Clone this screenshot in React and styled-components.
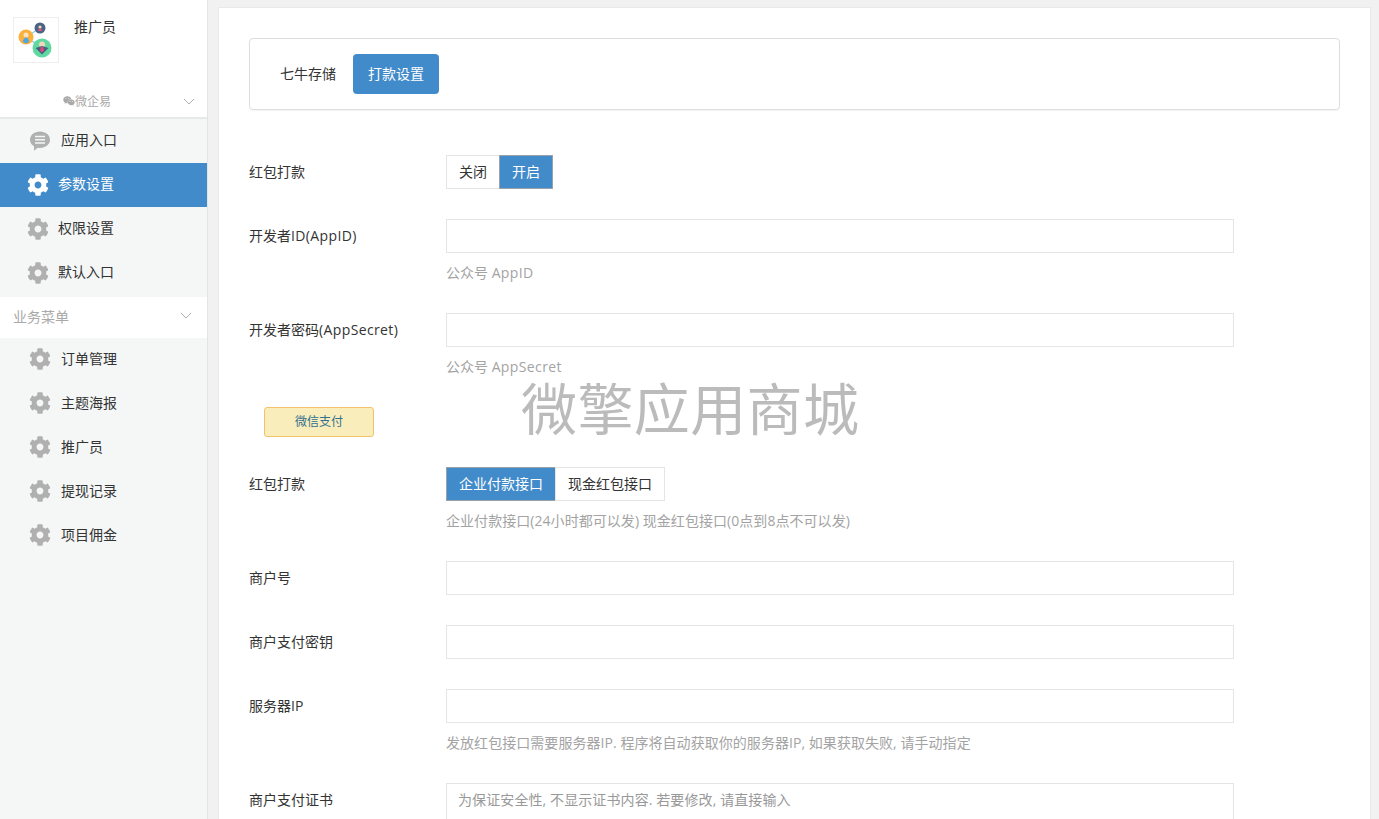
import React from "react";
import styled, { createGlobalStyle } from "styled-components";
import { FaCog, FaWeixin } from "react-icons/fa";

const Global = createGlobalStyle`
  html, body { margin: 0; padding: 0; height: 819px; overflow: hidden; background: #f1f1f1; }
  body { font-family: "Open Sans", "Noto Sans CJK SC", sans-serif; font-size: 14px; color: #333; }
  * { box-sizing: border-box; }
`;

const Page = styled.div`
  display: flex;
  height: 819px;
  overflow: hidden;
`;
const Side = styled.aside`
  width: 208px;
  flex: none;
  background: #f5f7f7;
  border-right: 1px solid #e3e5e5;
  height: 819px;
`;
const Brand = styled.div`
  height: 119px;
  background: #fff;
  border-bottom: 2px solid #e7e9e9;
  display: flex;
  flex-direction: column;
`;
const BrandTop = styled.div`
  display: flex;
  padding: 17px 0 0 13px;
  gap: 15px;
  height: 91px;
`;
const LogoBox = styled.div`
  width: 46px;
  height: 46px;
  border: 1px solid #eee;
`;
const BrandName = styled.div`
  line-height: 20px;
  color: #333;
`;
const AppRow = styled.div`
  display: flex;
  align-items: center;
  justify-content: space-between;
  height: 20px;
  padding: 0 12px 0 63px;
  font-size: 12px;
  color: #a9a9a9;
`;
const AppLabel = styled.span`
  display: flex;
  align-items: center;
`;
const NavItem = styled.div`
  height: 44px;
  display: flex;
  align-items: center;
  padding-left: ${p => p.$indent}px;
  gap: ${p => p.$gap}px;
  background: ${p => (p.$active ? "#428bca" : "transparent")};
  color: ${p => (p.$active ? "#fff" : "#333")};
  font-size: 14px;
`;
const NavText = styled.span`
  margin-bottom: ${p => p.$lift}px;
`;
const IconSlot = styled.span`
  display: flex;
  color: ${p => (p.$active ? "#fff" : "#b0b0b0")};
  font-size: 22px;
`;
const Group = styled.div`
  height: 41px;
  margin-top: 2px;
  background: #fff;
  display: flex;
  align-items: center;
  justify-content: space-between;
  padding: 0 15px 4px 13px;
  color: #a9a9a9;
  font-size: 14px;
  margin-bottom: -1px;
`;
const Main = styled.main`
  width: 1153px;
  margin: 7px 0 0 10px;
  background: #fff;
  border: 1px solid #e9e9e9;
  padding: 30px 30px 0 30px;
  height: 900px;
  position: relative;
  flex: none;
`;
const TabBar = styled.div`
  width: 1091px;
  height: 72px;
  border: 1px solid #ddd;
  border-radius: 4px;
  box-shadow: 0 1px 1px rgba(0,0,0,.05);
  padding: 15px;
  display: flex;
  gap: 2px;
  margin-bottom: 45px;
`;
const Tab = styled.div`
  height: 40px;
  padding: 0 15px;
  line-height: 40px;
  border-radius: 4px;
  background: ${p => (p.$active ? "#428bca" : "transparent")};
  color: ${p => (p.$active ? "#fff" : "#333")};
`;
const Row = styled.div`
  display: flex;
  margin-bottom: 30px;
`;
const Label = styled.label`
  width: 197px;
  flex: none;
  line-height: 20px;
  padding-top: 7px;
  color: #333;
`;
const Latin = styled.span`
  letter-spacing: 0.38px;
`;
const Field = styled.div`
  width: 788px;
`;
const Input = styled.div`
  height: 34px;
  border: 1px solid #e5e5e5;
  background: #fff;
`;
const TextArea = styled.div`
  height: 80px;
  border: 1px solid #e5e5e5;
  padding: 6px 11px;
  line-height: 20px;
  letter-spacing: 0.1px;
  color: #999;
`;
const Help = styled.div`
  margin-top: 10px;
  line-height: 20px;
  color: #a3a3a3;
  letter-spacing: ${p => (p.$long ? "0.05px" : "0")};
`;
const Toggle = styled.div`
  display: inline-flex;
  height: 34px;
`;
const ToggleBtn = styled.div`
  padding: 0 12px;
  line-height: 32px;
  border: 1px solid ${p => (p.$on ? "#9aa3ab" : "#e5e5e5")};
  background: ${p => (p.$on ? "#428bca" : "#fff")};
  color: ${p => (p.$on ? "#fff" : "#333")};
  margin-left: ${p => (p.$first ? 0 : -1)}px;
`;
const Tag = styled.div`
  margin: 0 0 30px 15px;
  width: 110px;
  height: 30px;
  line-height: 28px;
  text-align: center;
  font-size: 12px;
  color: #31708f;
  background: #faedbc;
  border: 1px solid #f4c26e;
  border-radius: 3px;
`;
const Watermark = styled.div`
  position: absolute;
  left: 302px;
  top: 371px;
  font-size: 56px;
  line-height: 58px;
  letter-spacing: 0.4px;
  color: rgba(120,120,120,.5);
  white-space: nowrap;
`;

const Chevron = () => (
  <svg width="12" height="7" viewBox="0 0 12 7" fill="none" stroke="#b0b0b0" strokeWidth="1">
    <path d="M1 1l5 5 5-5" />
  </svg>
);
const Bubble = () => (
  <svg width="22" height="22" viewBox="0 0 22 22">
    <path fill="#b0b0b0" d="M11 1.500c5.600 0 10 3.600 10 8.200s-4.400 8.200-10 8.200c-.8 0-1.500-.1-2.300-.2L5 20.700V16.300C2.500 14.800 1 12.400 1 9.700 1 5.100 5.400 1.500 11 1.500z" />
    <path stroke="#f4f6f6" strokeWidth="1.500" d="M6 6.500h10M6 9.800h10M6 13h10" />
  </svg>
);
const Logo = () => (
  <svg width="44" height="44" viewBox="14 18 44 44" style={{ display: "block" }}>
    <path stroke="#8fc7e8" strokeWidth="1.200" fill="none" d="M26 37L40 28M26 37l16 11" />
    <circle cx="26" cy="37" r="7.500" fill="#fbb03b" />
    <circle cx="26" cy="35" r="2.500" fill="#fde3c0" />
    <path fill="#4da6e8" d="M23 42c0-3 1.500-4.500 3-4.500s3 1.500 3 4.500l-3 1.500z" />
    <circle cx="40" cy="28" r="5.500" fill="#4a6583" />
    <circle cx="40" cy="27" r="1.600" fill="#f5d6b8" />
    <path fill="#e0557f" d="M38 31c0-1.500 1-2.500 2-2.500s2 1 2 2.500z" />
    <circle cx="42" cy="48" r="9.500" fill="#5fd9a2" />
    <circle cx="42" cy="44.500" r="3" fill="#f5d6b8" />
    <path fill="#4a5f7d" d="M35.500 48l6.500-2 6.500 2-6.500 6.500z" />
    <path fill="#e0457f" d="M41 47h2l1 3.500-2 2-2-2z" />
  </svg>
);

const top = [
  { t: "应用入口", bubble: true, indent: 29, gap: 10 },
  { t: "参数设置", active: true, indent: 27, gap: 9 },
  { t: "权限设置", indent: 27, gap: 9 },
  { t: "默认入口", indent: 27, gap: 9 },
];
const biz = ["订单管理", "主题海报", "推广员", "提现记录", "项目佣金"];

export default function App() {
  return (
    <Page>
      <Global />
      <Side>
        <Brand>
          <BrandTop>
            <LogoBox><Logo /></LogoBox>
            <BrandName>推广员</BrandName>
          </BrandTop>
          <AppRow>
            <AppLabel><FaWeixin size={12} />微企易</AppLabel>
            <Chevron />
          </AppRow>
        </Brand>
        {top.map(i => (
          <NavItem key={i.t} $active={i.active} $indent={i.indent} $gap={i.gap}>
            <IconSlot $active={i.active}>{i.bubble ? <Bubble /> : <FaCog />}</IconSlot>
            <NavText $lift={4}>{i.t}</NavText>
          </NavItem>
        ))}
        <Group>业务菜单<Chevron /></Group>
        {biz.map(t => (
          <NavItem key={t} $indent={29} $gap={10}>
            <IconSlot><FaCog /></IconSlot>
            <NavText $lift={2}>{t}</NavText>
          </NavItem>
        ))}
      </Side>
      <Main>
        <TabBar>
          <Tab>七牛存储</Tab>
          <Tab $active>打款设置</Tab>
        </TabBar>
        <Row>
          <Label>红包打款</Label>
          <Field>
            <Toggle>
              <ToggleBtn $first>关闭</ToggleBtn>
              <ToggleBtn $on>开启</ToggleBtn>
            </Toggle>
          </Field>
        </Row>
        <Row>
          <Label>开发者<Latin>ID(AppID)</Latin></Label>
          <Field><Input /><Help>公众号 <Latin>AppID</Latin></Help></Field>
        </Row>
        <Row>
          <Label>开发者密码<Latin>(AppSecret)</Latin></Label>
          <Field><Input /><Help>公众号 <Latin>AppSecret</Latin></Help></Field>
        </Row>
        <Tag>微信支付</Tag>
        <Row>
          <Label>红包打款</Label>
          <Field>
            <Toggle>
              <ToggleBtn $first $on>企业付款接口</ToggleBtn>
              <ToggleBtn>现金红包接口</ToggleBtn>
            </Toggle>
            <Help $long>企业付款接口(24小时都可以发) 现金红包接口(0点到8点不可以发)</Help>
          </Field>
        </Row>
        <Row>
          <Label>商户号</Label>
          <Field><Input /></Field>
        </Row>
        <Row>
          <Label>商户支付密钥</Label>
          <Field><Input /></Field>
        </Row>
        <Row>
          <Label>服务器IP</Label>
          <Field><Input /><Help $long>发放红包接口需要服务器IP. 程序将自动获取你的服务器IP, 如果获取失败, 请手动指定</Help></Field>
        </Row>
        <Row>
          <Label>商户支付证书</Label>
          <Field><TextArea>为保证安全性, 不显示证书内容. 若要修改, 请直接输入</TextArea></Field>
        </Row>
        <Watermark>微擎应用商城</Watermark>
      </Main>
    </Page>
  );
}
